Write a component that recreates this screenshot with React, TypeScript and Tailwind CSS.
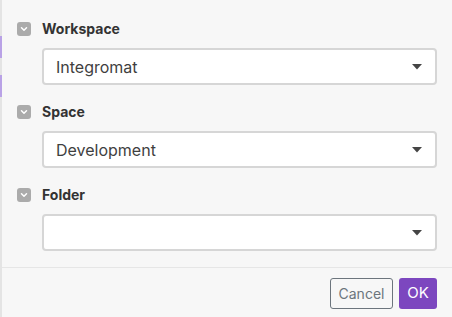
import React from 'react';

const fields = [
  { label: 'Workspace', value: 'Integromat' },
  { label: 'Space', value: 'Development' },
  { label: 'Folder', value: '' },
];

const ToggleBox = () => (
  <div className="w-[14px] h-[14px] rounded-[3px] bg-[#ababab] flex items-center justify-center">
    <svg width="8" height="6" viewBox="0 0 8 6">
      <path d="M1.5 1.8 L4 4.2 L6.5 1.8" fill="none" stroke="#fff" strokeWidth="1.5" strokeLinecap="round" strokeLinejoin="round" />
    </svg>
  </div>
);

const Caret = () => (
  <svg width="10" height="6" viewBox="0 0 10 6">
    <path d="M0 0 L10 0 L5 5.5 Z" fill="#454545" />
  </svg>
);

export default function App() {
  return (
    <div
      className="w-[452px] h-[317px] bg-[#f7f7f7] flex overflow-hidden"
      style={{ fontFamily: 'Inter, "Noto Sans", sans-serif' }}
    >
      {/* left strip */}
      <div className="w-[2px] bg-[#e4e4e4] flex flex-col">
        <div className="h-[36px]" />
        <div className="h-[22px] bg-[#b9a2e6]" />
        <div className="h-[17px]" />
        <div className="h-[22px] bg-[#b9a2e6]" />
      </div>

      <div className="flex-1 flex flex-col">
        <div className="pl-[15px] pr-[15px] pt-[22px] flex flex-col gap-[20px]">
          {fields.map(f => (
            <div key={f.label} className="flex flex-col">
              <div className="flex items-center h-[14px]">
                <ToggleBox />
                <span className="ml-[11px] text-[14px] font-bold text-[#333] leading-none">{f.label}</span>
              </div>
              <div className="ml-[25px] mt-[12px] h-[37px] border-2 border-[#d6d6d6] rounded-[4px] bg-white flex items-center pl-[12px] pr-[13px]">
                <span className="flex-1 text-[16px] text-[#3f3f3f] leading-none">{f.value}</span>
                <Caret />
              </div>
            </div>
          ))}
        </div>

        <div className="mt-[16px] border-t border-[#e6e6e6]" />

        <div className="flex justify-end gap-[6px] pt-[10px] pr-[15px]">
          <button className="h-[31px] w-[63px] border border-[#6c757d] rounded-[3px] text-[14px] text-[#6c757d] bg-transparent">
            Cancel
          </button>
          <button className="h-[31px] w-[38px] rounded-[3px] text-[15px] text-white bg-[#7c47bf]">
            OK
          </button>
        </div>
      </div>
    </div>
  );
}
